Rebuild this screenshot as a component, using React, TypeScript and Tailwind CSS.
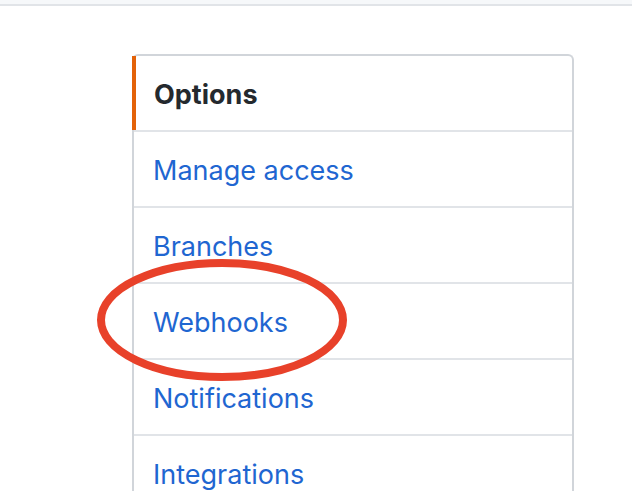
export default function App() {
  const items = ["Manage access", "Branches", "Webhooks", "Notifications", "Integrations"];

  return (
    <div className="relative h-[491px] w-[632px] overflow-hidden bg-white font-['Inter',sans-serif]">
      <div className="h-[6px] border-b-2 border-[#e1e4e8] bg-[#f6f8fa]" />

      <div className="ml-[132px] mt-[48px] w-[442px] rounded-t-md border-2 border-b-0 border-[#d1d5da]">
        <div className="flex h-[74px] items-center border-l-4 border-[#e36209] -ml-[2px] pl-[18px] pt-[5px] text-[27px] font-bold text-[#24292e]">
          Options
        </div>
        {items.map((item) => (
          <div
            key={item}
            className="flex h-[76px] items-center border-t-2 border-[#e1e4e8] pl-[19px] pt-[5px] text-[27px] text-[#1f66d1]"
          >
            {item}
          </div>
        ))}
      </div>

      {/* red circle drawn around Webhooks */}
      <svg
        className="absolute left-0 top-0"
        width="632"
        height="491"
        viewBox="0 0 632 491"
      >
        <ellipse cx="222" cy="320" rx="121" ry="57" fill="none" stroke="#e8412a" strokeWidth="8" />
      </svg>
    </div>
  );
}
